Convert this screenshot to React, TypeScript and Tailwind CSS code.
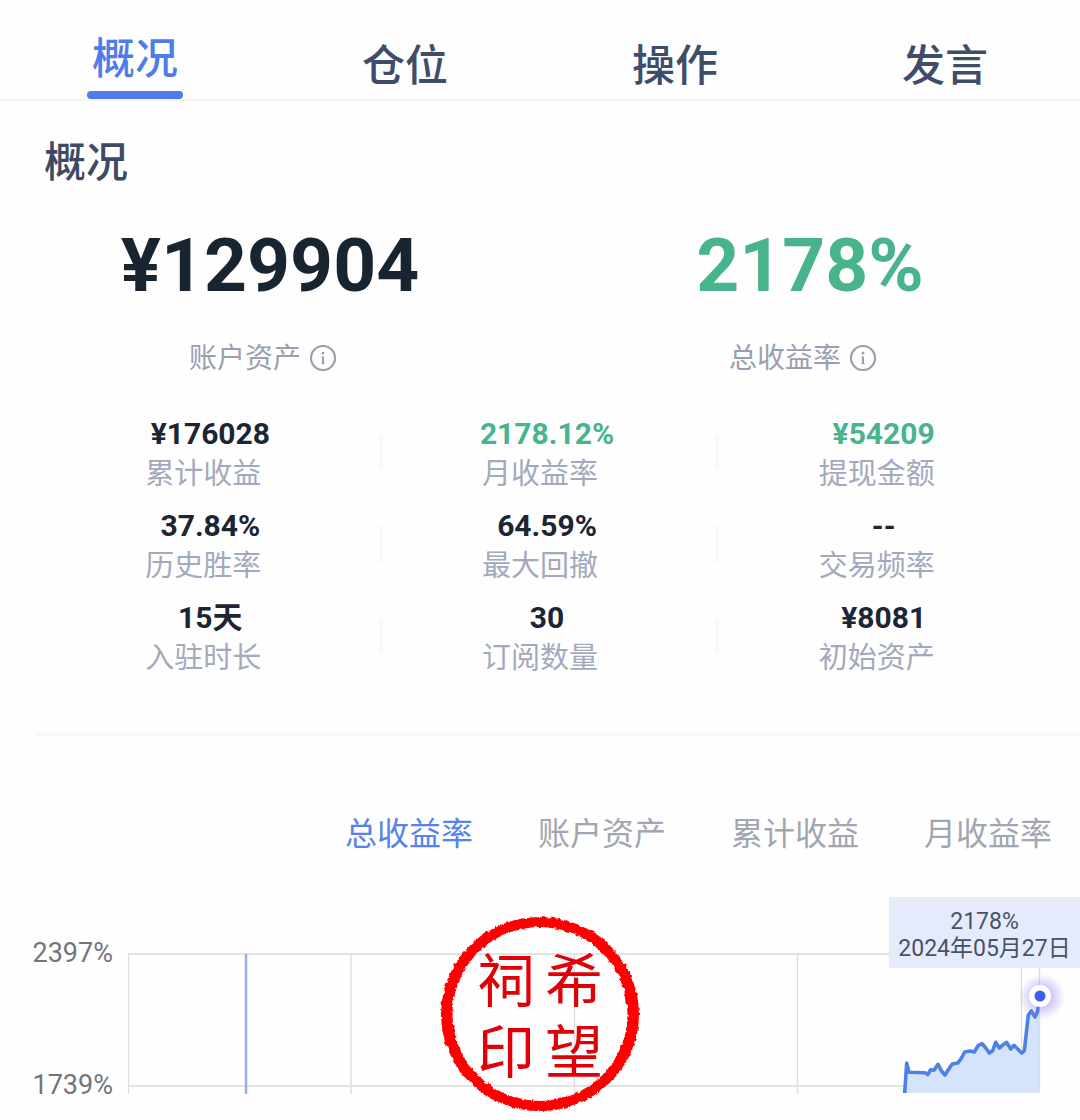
import { useState } from 'react'
import clsx from 'clsx'

const pageTabs = ['概况', '仓位', '操作', '发言']

const headline = [
  { label: '账户资产', value: '¥129904', positive: false },
  { label: '总收益率', value: '2178%', positive: true },
]

const stats = [
  { label: '累计收益', value: '¥176028' },
  { label: '月收益率', value: '2178.12%', positive: true },
  { label: '提现金额', value: '¥54209', positive: true },
  { label: '历史胜率', value: '37.84%' },
  { label: '最大回撤', value: '64.59%' },
  { label: '交易频率', value: '--' },
  { label: '入驻时长', value: '15天' },
  { label: '订阅数量', value: '30' },
  { label: '初始资产', value: '¥8081' },
]

const chartTabs = ['总收益率', '账户资产', '累计收益', '月收益率']

const linePoints =
  'M776.7 150 L778.7 120 L781 129.3 L797 129.7 L799.7 131.5 L802.7 126.7 L806 127.3 L810 121.3 L813.7 128.3 L817 132 L820.3 126.7 L824.3 121 L829.7 120 L832.7 116.3 L836.7 109 L842 108 L846.3 109 L850.3 102.3 L854 100.7 L857.3 104.3 L861.3 110 L864.7 107.7 L867.7 99.3 L871.3 105 L875.3 101.7 L878.7 99.3 L882.7 106 L886 102.3 L889.7 106 L893.7 110 L896.3 107.7 L898 92.7 L900.3 72 L903.3 68 L907 74 L909.3 69.3 L911 58'

const InfoIcon = () => (
  <svg width="28" height="28" viewBox="0 0 28 28" fill="none" stroke="currentColor" strokeWidth="2.2">
    <circle cx="14" cy="13" r="12" />
    <path d="M14 11.6v7.4" strokeWidth="2" />
    <path d="M12.4 12.2h1.6M12.4 18.6h3.2" strokeWidth="1" />
    <circle cx="14" cy="8.2" r="1.4" fill="currentColor" stroke="none" />
  </svg>
)

const Seal = () => (
  <div className="absolute -top-7 left-1/2 h-[198px] w-[204px] -translate-x-1/2 text-[#e00008]">
    <svg className="absolute inset-0 size-full" viewBox="0 0 204 198">
      <defs>
        <filter id="rough" x="-5%" y="-5%" width="110%" height="110%">
          <feTurbulence type="fractalNoise" baseFrequency="0.22" numOctaves="3" seed="4" />
          <feDisplacementMap in="SourceGraphic" scale="4" xChannelSelector="R" yChannelSelector="G" />
        </filter>
      </defs>
      <path
        d="M3 99a99 97 0 1 0 198 0a99 97 0 1 0 -198 0ZM14.5 99a87.5 87 0 1 1 175 0a87.5 87 0 1 1 -175 0Z"
        fill="#fe0000"
        fillRule="evenodd"
        filter="url(#rough)"
      />
    </svg>
    <div className="absolute inset-0 grid grid-cols-[68px_68px] content-center justify-center pt-2 text-center text-[58px] leading-[71px]">
      <span>祠</span>
      <span>希</span>
      <span>印</span>
      <span>望</span>
    </div>
  </div>
)

const Chart = () => (
  <div className="relative mt-[85px] flex">
    <div className="flex h-[152px] w-32 shrink-0 flex-col justify-between pr-[15px] text-right text-[27px] leading-5 text-[#72767c]">
      <span>2397%</span>
      <span>1739%</span>
    </div>
    <div className="relative min-w-0 flex-1">
      <svg className="block w-full" viewBox="0 0 952 176" fill="none">
        <defs>
          <radialGradient id="glow">
            <stop offset="0.4" stopColor="#8a6cf0" stopOpacity="0.4" />
            <stop offset="1" stopColor="#8a6cf0" stopOpacity="0" />
          </radialGradient>
        </defs>
        <path d={`${linePoints} L912 60 V150 H776.7 Z`} fill="#d5e4fb" />
        <path d="M0 11H912M0 143H776" stroke="#e3e3e5" strokeWidth="2" />
        <path d="M0.5 11V151M223 11V151M446.5 11V151M669.5 11V151M893.5 11V106M911.5 11V150" stroke="#dedee1" strokeWidth="1.4" />
        <path d="M118 11V151" stroke="#92b2e4" strokeWidth="2.5" />
        <path d={linePoints} stroke="#4c82e8" strokeWidth="3.6" strokeLinejoin="round" />
        <circle cx="914" cy="54" r="23" fill="url(#glow)" />
        <circle cx="912" cy="53" r="11" fill="#fff" />
        <circle cx="912" cy="53" r="5.5" fill="#3f5cf0" />
      </svg>
      <div className="absolute -top-[46px] right-0 flex h-[71px] w-[191px] flex-col items-center justify-center bg-[#e6ebfb] pt-1 text-[23px] leading-[27px] whitespace-nowrap text-[#465266]">
        <span>2178%</span>
        <span>2024年05月27日</span>
      </div>
    </div>
    <Seal />
  </div>
)

export default function App() {
  const [page, setPage] = useState('概况')
  const [series, setSeries] = useState('总收益率')

  return (
    <main className="overflow-hidden bg-[#fefefe] font-[Roboto,'Noto_Sans_CJK_SC',sans-serif]">
      {/* page tabs */}
      <nav className="grid h-[101px] grid-cols-4 border-b-2 border-[#f4f4f5]">
        {pageTabs.map((tab) => {
          const isActive = tab === page
          return (
            <button
              key={tab}
              onClick={() => setPage(tab)}
              className={clsx(
                'flex flex-col items-center justify-end text-[43px] leading-[60px] font-medium',
                isActive ? 'gap-0.5 text-[#4f7cec]' : 'pb-[3px] text-[#3f4d68]',
              )}
            >
              {tab}
              {isActive && <span className="h-2 w-24 rounded-sm bg-[#4f7cec]" />}
            </button>
          )
        })}
      </nav>

      {/* overview */}
      <section>
        <h2 className="mt-8 ml-11 text-[42px] leading-[60px] font-medium text-[#3c4a62]">概况</h2>

        <dl className="mt-8 grid grid-cols-2 text-center">
          {headline.map((item) => (
            <div key={item.label} className="flex flex-col-reverse gap-[34px]">
              <dt className="flex items-center justify-center gap-2 pr-3.5 text-[28px] leading-10 text-[#9a9fb0]">
                {item.label}
                <button aria-label={`${item.label}说明`}>
                  <InfoIcon />
                </button>
              </dt>
              <dd
                className={clsx(
                  'text-[75px] leading-[80px] font-bold',
                  item.positive ? 'text-[#47b48c]' : 'text-[#182530]',
                )}
              >
                {item.value}
              </dd>
            </div>
          ))}
        </dl>

        <dl className="mt-[35px] grid grid-cols-3 gap-y-3 pr-7 pl-[42px] text-center">
          {stats.map((item, index) => (
            <div key={item.label} className="relative flex flex-col-reverse">
              <dt className="pr-3.5 text-[29px] leading-10 text-[#a3a9bc]">{item.label}</dt>
              <dd
                className={clsx(
                  'text-[30px] leading-10 font-bold',
                  item.positive ? 'text-[#47b48c]' : 'text-[#1c2532]',
                )}
              >
                {item.value}
              </dd>
              {index % 3 < 2 && (
                <span className="absolute top-5 -right-1 h-9 w-1 bg-[#f8f7fa]" />
              )}
            </div>
          ))}
        </dl>
      </section>

      <hr className="mt-[54px] ml-9 h-1 border-0 bg-[#f8f8f9]" />

      {/* yield chart */}
      <section>
        <div className="mt-[74px] flex justify-end gap-[65px] pr-7">
          {chartTabs.map((tab) => (
            <button
              key={tab}
              onClick={() => setSeries(tab)}
              className={clsx(
                'text-[32px] leading-[48px]',
                tab === series ? 'text-[#5682ee]' : 'text-[#a2a6b0]',
              )}
            >
              {tab}
            </button>
          ))}
        </div>
        <Chart />
      </section>
    </main>
  )
}
